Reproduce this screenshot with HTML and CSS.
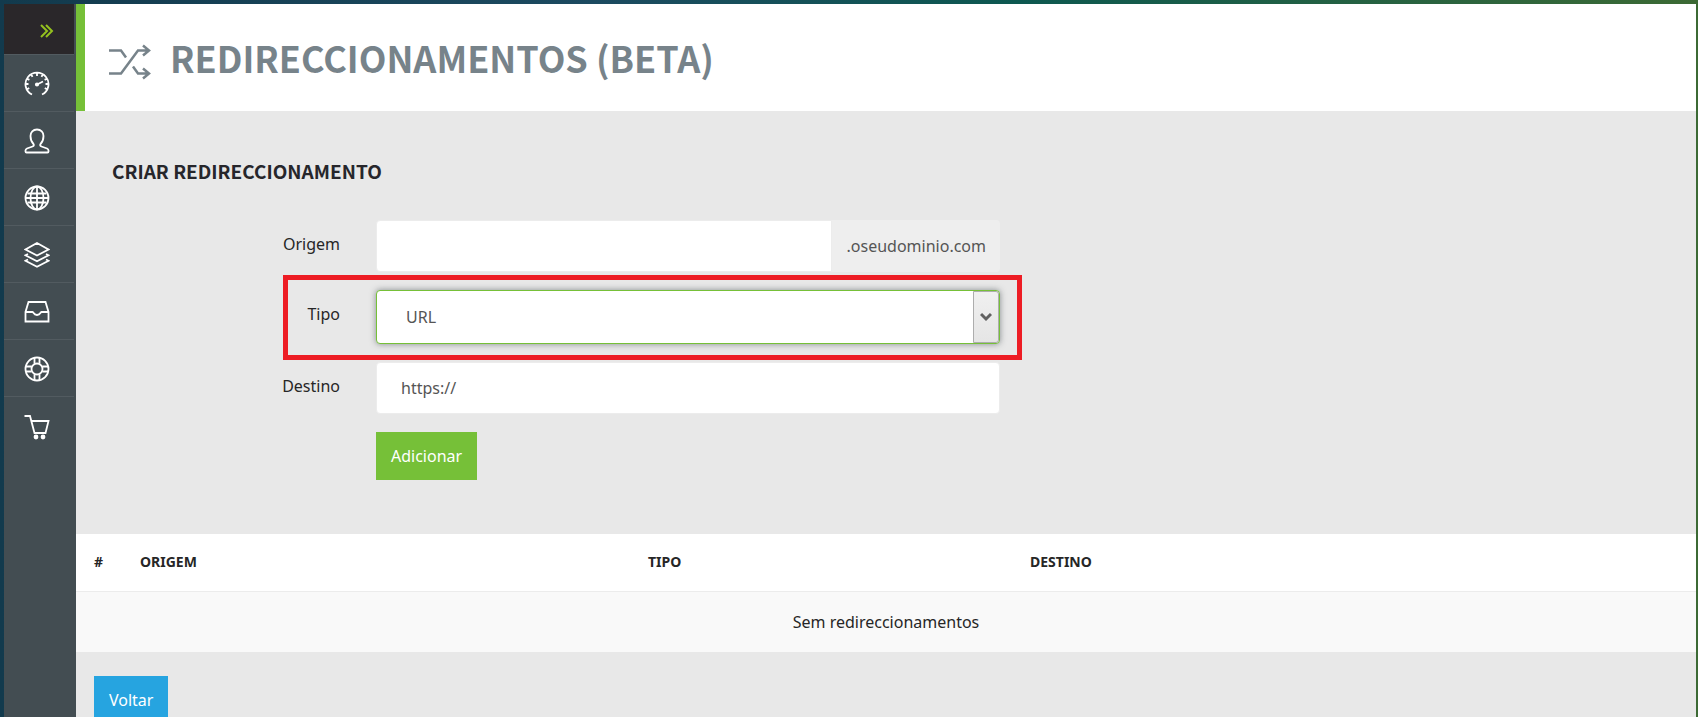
FILE: index.html
```html
<!DOCTYPE html>
<html lang="pt">
<head>
  <meta charset="UTF-8">
  <meta name="viewport" content="width=device-width, initial-scale=1.0">
  <title>Redireccionamentos (Beta)</title>
  <link rel="stylesheet" href="styles.css">
</head>
<body>
  <div class="app">
    <nav class="sidebar">
      <button type="button" class="sidebar-toggle" aria-label="Expandir menu">
        <svg width="14" height="14" viewBox="0 0 14 14"><path d="M1 1l6 6-6 6M6 1l6 6-6 6"/></svg>
      </button>
      <a href="#" class="sidebar-link" aria-label="Painel">
        <svg viewBox="0 0 26 26"><path d="M8 23.5a11.5 11.5 0 1 1 10 0M13 2v3M7.3 3.5l1.2 2.3M18.7 3.5l-1.2 2.3M3.2 7.7l2.2 1.2M22.8 7.7l-2.2 1.2M2 13h2.5M24 13h-2.5M3.2 18.3l2-1.2M22.8 18.3l-2-1.2M13 13.5l6-3"/><circle class="fill" cx="13" cy="13.5" r="1.2"/></svg>
      </a>
      <a href="#" class="sidebar-link" aria-label="Conta">
        <svg viewBox="0 0 26 26"><path d="M13 1.500c-4 0-6.500 2.800-6.500 6.500 0 4 1.500 6.500 3 8 .8 1.200.2 2-1 2.500L3 20.500c-1 .5-1.500 1-1.500 2v1c0 .7.3 1 1 1h21c.7 0 1-.3 1-1v-1c0-1-.5-1.500-1.500-2l-5.500-2c-1.200-.5-1.800-1.300-1-2.500 1.500-1.500 3-4 3-8 0-3.700-2.500-6.500-6.500-6.500z"/></svg>
      </a>
      <a href="#" class="sidebar-link" aria-label="Domínios">
        <svg viewBox="0 0 26 26"><circle cx="13" cy="13" r="11.5"/><ellipse cx="13" cy="13" rx="6.5" ry="11.5"/><path d="M13 1.500v23M1.500 13h23M3.500 8.500h19M3.500 17.500h19"/></svg>
      </a>
      <a href="#" class="sidebar-link" aria-label="Serviços">
        <svg viewBox="0 0 26 26"><path d="M13 1l11.500 6.500-11.500 6-11.500-6zM4 12l-2.500 1.200 11.500 6 11.500-6L22 12M4 17.500l-2.500 1.200 11.500 6 11.500-6-2.500-1.200"/></svg>
      </a>
      <a href="#" class="sidebar-link" aria-label="Mensagens">
        <svg viewBox="0 0 26 26"><path d="M4.500 3h17l3 10v9.500h-23V13zM1.500 13h7c1 0 1 3 4.500 3s3.500-3 4.500-3h7"/></svg>
      </a>
      <a href="#" class="sidebar-link" aria-label="Suporte">
        <svg viewBox="0 0 26 26"><circle cx="13" cy="13" r="11.5"/><circle cx="13" cy="13" r="5.5"/><path d="M10.500 1.800v6M15.500 1.800v6M10.500 18.200v6M15.500 18.200v6M1.800 10.500h6M1.800 15.500h6M18.200 10.500h6M18.200 15.500h6"/></svg>
      </a>
      <a href="#" class="sidebar-link" aria-label="Carrinho">
        <svg viewBox="0 0 26 26"><path d="M.5 2H6l4.500 17h11l3-12H7.500"/><circle class="fill" cx="12" cy="23" r="1.500"/><circle class="fill" cx="19" cy="23" r="1.500"/></svg>
      </a>
    </nav>

    <main class="content">
      <header class="page-header">
        <svg class="page-icon" width="42" height="36" viewBox="0 0 42 36"><path d="M0 6.500h12l5 7M0 29.500h12L29 6.500h11M24 22.500l5 7h11M34 1.500l6 5-6 5M34 24.500l6 5-6 5"/></svg>
        <h1>REDIRECCIONAMENTOS (BETA)</h1>
      </header>

      <form class="redirect-form">
        <h2>CRIAR REDIRECCIONAMENTO</h2>
        <div class="form-row">
          <label for="origem">Origem</label>
          <div class="input-group">
            <input type="text" id="origem" class="form-control">
            <span class="input-addon">.oseudominio.com</span>
          </div>
        </div>
        <div class="form-row">
          <label for="tipo">Tipo</label>
          <div class="select-wrap">
            <select id="tipo" class="form-control form-select">
              <option>URL</option>
            </select>
            <span class="select-arrow"><svg width="12" height="10" viewBox="0 0 12 10"><path d="M1 2l5 5 5-5"/></svg></span>
          </div>
          <div class="highlight"></div>
        </div>
        <div class="form-row">
          <label for="destino">Destino</label>
          <input type="text" id="destino" class="form-control" value="https://">
        </div>
        <button type="button" class="btn btn-add">Adicionar</button>
      </form>

      <table class="redirect-table">
        <thead>
          <tr>
            <th class="col-id">#</th>
            <th class="col-origem">ORIGEM</th>
            <th class="col-tipo">TIPO</th>
            <th>DESTINO</th>
          </tr>
        </thead>
        <tbody>
          <tr>
            <td colspan="4">Sem redireccionamentos</td>
          </tr>
        </tbody>
      </table>

      <div class="page-actions">
        <a href="#" class="btn btn-back">Voltar</a>
      </div>
    </main>
  </div>
</body>
</html>
```
FILE: styles.css
```css
* {
  box-sizing: border-box;
}
body {
  margin: 0;
  height: 100vh;
  overflow: hidden;
  padding: 4px 2px 0 4px;
  background: linear-gradient(to right, #123a4d, #1c4a60 35%, #0d5850 60%, #3c6a34);
  font-family: 'Noto Sans', sans-serif;
  font-size: 16px;
  line-height: 24px;
  color: #262626;
}
.app {
  display: flex;
  height: 100%;
}

/* Sidebar */
.sidebar {
  flex: none;
  width: 72px;
  padding-right: 2px;
  background-color: #434d52;
}
.sidebar-toggle {
  display: flex;
  align-items: center;
  justify-content: flex-end;
  width: 100%;
  height: 51px;
  padding: 4px 20px 0 0;
  border: 0;
  border-bottom: 1px solid #525b60;
  background-color: #2a272a;
}
.sidebar-link {
  display: flex;
  align-items: center;
  justify-content: center;
  height: 57px;
  padding: 2px 4px 0 0;
  border-bottom: 1px solid #525b60;
}
.sidebar-link:last-child {
  border-bottom: 0;
}
.sidebar svg {
  fill: none;
  stroke: #fff;
  stroke-width: 1.8;
}
.sidebar-link svg {
  width: 26px;
  height: 26px;
}
.sidebar .fill {
  fill: #fff;
}
.sidebar-toggle svg {
  stroke: #94c11f;
  stroke-width: 2;
}

/* Content */
.content {
  flex: 1;
  overflow: hidden;
  background-color: #e8e8e8;
}
.page-header {
  display: flex;
  align-items: center;
  gap: 19px;
  height: 107px;
  padding-left: 24px;
  border-left: 9px solid #76c038;
  background-color: #fff;
}
.page-icon {
  margin-top: 8px;
  fill: none;
  stroke: #77838a;
  stroke-width: 2.5;
}
h1,
h2 {
  margin: 0;
  font-family: 'Noto Sans CJK JP', sans-serif;
  font-weight: 700;
}
h1 {
  padding-bottom: 2px;
  font-size: 36px;
  line-height: 48px;
  color: #77838a;
}
h2 {
  margin-bottom: 37px;
  font-size: 19px;
  line-height: 24px;
  color: #26262b;
}

/* Form */
.redirect-form {
  padding: 48px 36px 54px;
}
.form-row {
  position: relative;
  display: flex;
  width: 888px;
  max-width: 100%;
  margin-bottom: 18px;
}
.form-row label {
  width: 228px;
  margin-right: 36px;
  padding-top: 12px;
  text-align: right;
}
.form-control {
  flex: 1;
  min-width: 0;
  width: 100%;
  height: 52px;
  padding: 0 24px;
  border: 1px solid #ececec;
  border-radius: 4px;
  background-color: #fff;
  font: inherit;
  color: #555;
}
.input-group {
  display: flex;
  flex: 1;
  height: 52px;
}
.input-group .form-control {
  border-radius: 4px 0 0 4px;
}
.input-addon {
  padding: 14px 14px 0 15px;
  border-radius: 0 4px 4px 0;
  background-color: #eee;
  color: #555;
}
.select-wrap {
  position: relative;
  flex: 1;
  height: 54px;
}
.form-select {
  height: 54px;
  padding: 0 29px;
  border-color: #76c038;
  box-shadow: 0 0 6px rgba(67, 77, 82, 0.6);
  appearance: none;
}
.select-arrow {
  position: absolute;
  top: 1px;
  right: 1px;
  display: flex;
  align-items: center;
  justify-content: center;
  width: 26px;
  height: 52px;
  border: 1px solid #adadad;
  border-radius: 0 3px 3px 0;
  background: linear-gradient(#f0f0f0, #e5e5e5);
  pointer-events: none;
}
.select-arrow svg {
  fill: none;
  stroke: #606060;
  stroke-width: 3;
}
/* Red frame around the type field */
.highlight {
  position: absolute;
  top: -15px;
  right: -22px;
  width: 739px;
  height: 85px;
  border: 5px solid #ed1c24;
  pointer-events: none;
}

/* Buttons */
.btn {
  display: block;
  width: fit-content;
  height: 48px;
  padding: 12px 15px;
  border: 0;
  font: inherit;
  color: #fff;
  text-decoration: none;
}
.btn-add {
  margin-left: 264px;
  background-color: #76c038;
}
.btn-back {
  background-color: #26a4e0;
}

/* Table */
.redirect-table {
  width: 100%;
  border-collapse: collapse;
  table-layout: fixed;
}
.redirect-table th {
  height: 57px;
  padding: 0 18px;
  border-bottom: 1px solid #ececec;
  background-color: #fff;
  font-size: 14px;
  text-align: left;
}
.redirect-table td {
  height: 61px;
  padding: 0;
  background-color: #f9f9f9;
  text-align: center;
}
.redirect-table .col-id {
  width: 46px;
  padding-right: 0;
}
.redirect-table .col-origem {
  width: 508px;
}
.redirect-table .col-tipo {
  width: 382px;
}
.page-actions {
  padding: 24px 18px;
}
```
